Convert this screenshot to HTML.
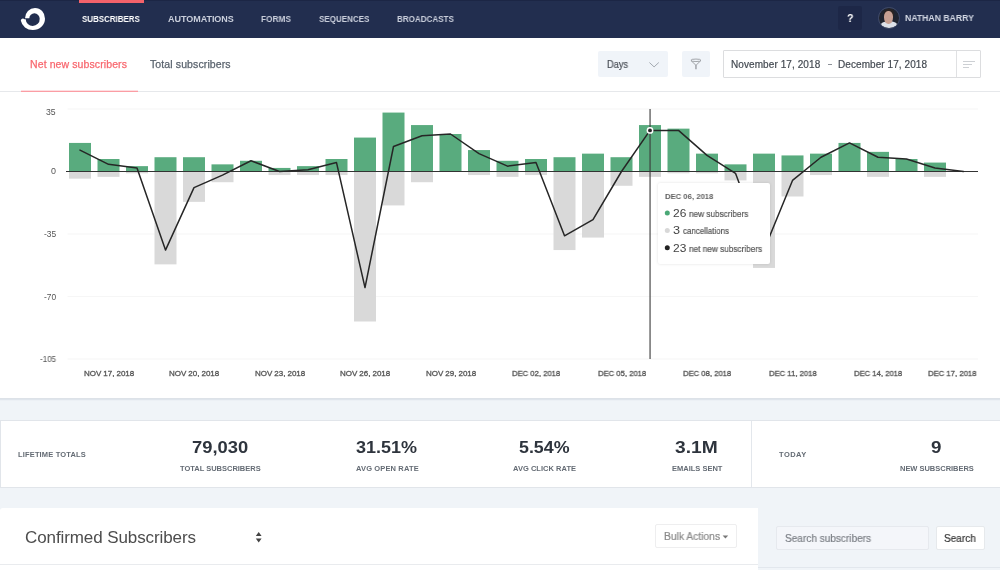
<!DOCTYPE html><html><head><meta charset="utf-8"><title>Subscribers</title><style>

*{box-sizing:border-box;margin:0;padding:0}
html,body{width:1000px;height:570px;overflow:hidden}
body{background:#f0f4f8;font-family:"Liberation Sans", sans-serif;position:relative;color:#444}
.a{position:absolute}
.t{position:absolute;white-space:nowrap;line-height:1;transform-origin:0 50%;will-change:transform}

</style></head><body>
<div class="a" style="left:0;top:38px;width:1000px;height:361px;background:#fff;border-bottom:1px solid #dde2e8;box-shadow:0 1px 1px rgba(170,185,200,.25)"></div>
<div class="a" style="left:0;top:0;width:1000px;height:38px;background:#222e4f;border-top:1px solid #1c2645"></div>
<div class="a" style="left:79px;top:0;width:65px;height:3px;background:#f4626a"></div>
<svg class="a" style="left:10px;top:0" width="50" height="38" viewBox="0 0 50 38"><path d="M15 18.3 A10 10.4 0 0 1 25 7.9 A10 10.6 0 0 1 35 18.7 A12.1 11.3 0 0 1 22.9 30 A12.1 11.3 0 0 1 10.8 20.6 A2.1 2.1 0 0 1 14.4 19.2 L15.7 19.3 A7 7 0 0 0 22.7 26 A7 7 0 0 0 29.7 18.7 A5.3 5.4 0 0 0 24.4 13.3 A5.2 5.2 0 0 0 19.3 18.3 Z" fill="#fff"/></svg>
<div class="a" style="left:838px;top:6px;width:24px;height:24px;background:#1d2747;border-radius:2px"></div>
<div class="a" style="left:878px;top:7px;width:21.6px;height:21.6px;border-radius:50%;background:#20242f;border:1px solid #414c6c;overflow:hidden"><div class="a" style="left:4.6px;top:0.6px;width:10.4px;height:8px;border-radius:50% 50% 30% 30%;background:#2b2422"></div><div class="a" style="left:0.6px;top:13.2px;width:18.4px;height:11px;border-radius:50% 50% 0 0;background:#dde1e9"></div><div class="a" style="left:5.4px;top:3.2px;width:8.8px;height:12.4px;border-radius:45% 45% 50% 50%;background:#c8a092"></div></div>
<div class="a" style="left:0;top:91px;width:1000px;height:1px;background:#e6e8eb"></div>
<div class="a" style="left:21px;top:90px;width:117px;height:1px;background:#fddfe2"></div>
<div class="a" style="left:21px;top:91px;width:117px;height:1px;background:#fb9da4"></div>
<div class="a" style="left:598px;top:51px;width:70px;height:26px;background:#f0f4f9;border-radius:2px"></div>
<svg class="a" style="left:648px;top:61px" width="12" height="8" viewBox="0 0 12 8"><path d="M1.4 1.5 L6.1 5.9 L10.8 1.5" fill="none" stroke="#9aa0a8" stroke-width="0.9"/></svg>
<div class="a" style="left:682px;top:51px;width:28px;height:26px;background:#f0f4f9;border-radius:2px"></div>
<svg class="a" style="left:689px;top:58px" width="14" height="13" viewBox="0 0 14 13"><g fill="none" stroke="#9a9da2" stroke-width="0.9"><ellipse cx="6.95" cy="2.3" rx="5" ry="1.25"/><path d="M1.95 2.5 L6.5 6.9 M11.95 2.5 L7.4 6.9"/><path d="M6.95 6.5 V11.3" stroke-width="1.4"/></g></svg>
<div class="a" style="left:723px;top:50px;width:258px;height:28px;background:#fff;border:1px solid #dcdddf;border-radius:1px"></div>
<div class="a" style="left:956px;top:51px;width:1px;height:26px;background:#e0e1e3"></div>
<div class="a" style="left:963px;top:61px;width:12px;height:1px;background:#cdd0d4"></div>
<div class="a" style="left:963px;top:64px;width:9px;height:1px;background:#cdd0d4"></div>
<div class="a" style="left:963px;top:67px;width:6px;height:1px;background:#cdd0d4"></div>
<div class="a" style="left:828px;top:63.5px;width:4px;height:1px;background:#8d9299"></div>
<svg width="1000" height="300" viewBox="0 100 1000 300" style="position:absolute;left:0;top:100px;overflow:visible">
<rect x="67.5" y="108.50" width="910.5" height="1" fill="#f6f6f6"/>
<rect x="67.5" y="233.50" width="910.5" height="1" fill="#f6f6f6"/>
<rect x="67.5" y="296.00" width="910.5" height="1" fill="#f6f6f6"/>
<rect x="67.5" y="358.50" width="910.5" height="1" fill="#f6f6f6"/>
<rect x="69.00" y="142.93" width="22.00" height="28.57" fill="#59ab7e"/>
<rect x="69.00" y="171.50" width="22.00" height="7.14" fill="#d9d9d9"/>
<rect x="97.50" y="159.00" width="22.00" height="12.50" fill="#59ab7e"/>
<rect x="97.50" y="171.50" width="22.00" height="5.36" fill="#d9d9d9"/>
<rect x="126.00" y="166.14" width="22.00" height="5.36" fill="#59ab7e"/>
<rect x="126.00" y="171.50" width="22.00" height="1.79" fill="#d9d9d9"/>
<rect x="154.50" y="157.21" width="22.00" height="14.29" fill="#59ab7e"/>
<rect x="154.50" y="171.50" width="22.00" height="92.86" fill="#d9d9d9"/>
<rect x="183.00" y="157.21" width="22.00" height="14.29" fill="#59ab7e"/>
<rect x="183.00" y="171.50" width="22.00" height="30.36" fill="#d9d9d9"/>
<rect x="211.50" y="164.36" width="22.00" height="7.14" fill="#59ab7e"/>
<rect x="211.50" y="171.50" width="22.00" height="10.71" fill="#d9d9d9"/>
<rect x="240.00" y="160.79" width="22.00" height="10.71" fill="#59ab7e"/>
<rect x="268.50" y="167.93" width="22.00" height="3.57" fill="#59ab7e"/>
<rect x="268.50" y="171.50" width="22.00" height="3.57" fill="#d9d9d9"/>
<rect x="297.00" y="166.14" width="22.00" height="5.36" fill="#59ab7e"/>
<rect x="297.00" y="171.50" width="22.00" height="3.57" fill="#d9d9d9"/>
<rect x="325.50" y="159.00" width="22.00" height="12.50" fill="#59ab7e"/>
<rect x="325.50" y="171.50" width="22.00" height="3.57" fill="#d9d9d9"/>
<rect x="354.00" y="137.57" width="22.00" height="33.93" fill="#59ab7e"/>
<rect x="354.00" y="171.50" width="22.00" height="150.00" fill="#d9d9d9"/>
<rect x="382.50" y="112.57" width="22.00" height="58.93" fill="#59ab7e"/>
<rect x="382.50" y="171.50" width="22.00" height="33.93" fill="#d9d9d9"/>
<rect x="411.00" y="125.07" width="22.00" height="46.43" fill="#59ab7e"/>
<rect x="411.00" y="171.50" width="22.00" height="10.71" fill="#d9d9d9"/>
<rect x="439.50" y="134.00" width="22.00" height="37.50" fill="#59ab7e"/>
<rect x="468.00" y="150.07" width="22.00" height="21.43" fill="#59ab7e"/>
<rect x="468.00" y="171.50" width="22.00" height="3.57" fill="#d9d9d9"/>
<rect x="496.50" y="160.79" width="22.00" height="10.71" fill="#59ab7e"/>
<rect x="496.50" y="171.50" width="22.00" height="5.36" fill="#d9d9d9"/>
<rect x="525.00" y="159.00" width="22.00" height="12.50" fill="#59ab7e"/>
<rect x="525.00" y="171.50" width="22.00" height="3.57" fill="#d9d9d9"/>
<rect x="553.50" y="157.21" width="22.00" height="14.29" fill="#59ab7e"/>
<rect x="553.50" y="171.50" width="22.00" height="78.57" fill="#d9d9d9"/>
<rect x="582.00" y="153.64" width="22.00" height="17.86" fill="#59ab7e"/>
<rect x="582.00" y="171.50" width="22.00" height="66.07" fill="#d9d9d9"/>
<rect x="610.50" y="157.21" width="22.00" height="14.29" fill="#59ab7e"/>
<rect x="610.50" y="171.50" width="22.00" height="14.29" fill="#d9d9d9"/>
<rect x="639.00" y="125.07" width="22.00" height="46.43" fill="#59ab7e"/>
<rect x="639.00" y="171.50" width="22.00" height="5.36" fill="#d9d9d9"/>
<rect x="667.50" y="128.64" width="22.00" height="42.86" fill="#59ab7e"/>
<rect x="667.50" y="171.50" width="22.00" height="1.79" fill="#d9d9d9"/>
<rect x="696.00" y="153.64" width="22.00" height="17.86" fill="#59ab7e"/>
<rect x="696.00" y="171.50" width="22.00" height="1.79" fill="#d9d9d9"/>
<rect x="724.50" y="164.36" width="22.00" height="7.14" fill="#59ab7e"/>
<rect x="724.50" y="171.50" width="22.00" height="8.93" fill="#d9d9d9"/>
<rect x="753.00" y="153.64" width="22.00" height="17.86" fill="#59ab7e"/>
<rect x="753.00" y="171.50" width="22.00" height="96.43" fill="#d9d9d9"/>
<rect x="781.50" y="155.43" width="22.00" height="16.07" fill="#59ab7e"/>
<rect x="781.50" y="171.50" width="22.00" height="25.00" fill="#d9d9d9"/>
<rect x="810.00" y="153.64" width="22.00" height="17.86" fill="#59ab7e"/>
<rect x="810.00" y="171.50" width="22.00" height="3.57" fill="#d9d9d9"/>
<rect x="838.50" y="142.93" width="22.00" height="28.57" fill="#59ab7e"/>
<rect x="867.00" y="151.86" width="22.00" height="19.64" fill="#59ab7e"/>
<rect x="867.00" y="171.50" width="22.00" height="5.36" fill="#d9d9d9"/>
<rect x="895.50" y="159.00" width="22.00" height="12.50" fill="#59ab7e"/>
<rect x="924.00" y="162.57" width="22.00" height="8.93" fill="#59ab7e"/>
<rect x="924.00" y="171.50" width="22.00" height="5.36" fill="#d9d9d9"/>
<rect x="66" y="171.00" width="912" height="1" fill="#333"/>
<polyline points="80.00,150.07 108.50,164.36 137.00,167.93 165.50,250.07 194.00,187.57 222.50,175.07 251.00,160.79 279.50,171.50 308.00,169.71 336.50,162.57 365.00,287.57 393.50,146.50 422.00,135.79 450.50,134.00 479.00,153.64 507.50,166.14 536.00,162.57 564.50,235.79 593.00,219.71 621.50,171.50 650.00,130.43 678.50,130.43 707.00,155.43 735.50,173.29 764.00,250.07 792.50,180.43 821.00,157.21 849.50,142.93 878.00,157.21 906.50,159.00 935.00,167.93 963.50,171.50" fill="none" stroke="#262626" stroke-width="1.5" stroke-linejoin="round" stroke-linecap="round"/>
<rect x="649.5" y="109" width="1.1" height="250" fill="#3a3a3a"/>
<circle cx="650" cy="130.43" r="3.4" fill="#fff"/>
<circle cx="650" cy="130.43" r="1.9" fill="#262626"/>
</svg>
<div class="a" style="left:657.5px;top:182.5px;width:112.5px;height:81.5px;background:#fff;border-radius:2px;box-shadow:0 0 3px rgba(0,0,0,.13)"></div>
<svg class="a" style="left:660px;top:205px" width="14" height="50" viewBox="660 205 14 50"><circle cx="667.3" cy="212.9" r="2.5" fill="#4aa876"/><circle cx="667.3" cy="230.5" r="2.5" fill="#d8d8d8"/><circle cx="667.3" cy="247.8" r="2.5" fill="#222"/></svg>
<div class="a" style="left:0;top:420px;width:1001px;height:68px;background:#fff;border:1px solid #e1e5ea"></div>
<div class="a" style="left:751px;top:421px;width:1px;height:66px;background:#e3e7ec"></div>
<div class="a" style="left:0;top:508px;width:758px;height:70px;background:#fff;border-radius:3px 0 0 0"></div>
<div class="a" style="left:0;top:564px;width:758px;height:1px;background:#e9ebee"></div>
<div class="a" style="left:758px;top:566.5px;width:242px;height:1px;background:#e2e7ed"></div>
<svg class="a" style="left:255px;top:531px" width="8" height="13" viewBox="0 0 8 13"><path d="M3.7 1 L6.6 5 H0.8 Z M3.7 11.6 L6.6 7.6 H0.8 Z" fill="#444"/></svg>
<div class="a" style="left:655px;top:524px;width:82px;height:24px;background:#fff;border:1px solid #eeeeef;border-radius:2px"></div>
<svg class="a" style="left:722px;top:535px" width="7" height="4" viewBox="0 0 7 4"><path d="M0.6 0.4 H6.2 L3.4 3.4 Z" fill="#777"/></svg>
<div class="a" style="left:776px;top:526px;width:152.5px;height:23.5px;background:#f4f6fa;border:1px solid #e6e9ee;border-radius:2px"></div>
<div class="a" style="left:936px;top:526px;width:49px;height:23.5px;background:#fff;border:1px solid #e6e9ec;border-radius:2px"></div>
<span class="t" style="left:81.95px;top:15.00px;font-size:9.00px;font-weight:700;color:#ffffff;letter-spacing:0.000px;transform:scaleX(0.8828);">SUBSCRIBERS</span>
<span class="t" style="left:168.07px;top:15.00px;font-size:9.00px;font-weight:700;color:#c9cedb;letter-spacing:-0.038px;transform:scaleX(1.0000);">AUTOMATIONS</span>
<span class="t" style="left:261.23px;top:15.00px;font-size:9.00px;font-weight:700;color:#c9cedb;letter-spacing:0.000px;transform:scaleX(0.9215);">FORMS</span>
<span class="t" style="left:319.44px;top:15.00px;font-size:9.00px;font-weight:700;color:#c9cedb;letter-spacing:0.000px;transform:scaleX(0.8921);">SEQUENCES</span>
<span class="t" style="left:397.29px;top:15.00px;font-size:9.00px;font-weight:700;color:#c9cedb;letter-spacing:0.000px;transform:scaleX(0.8956);">BROADCASTS</span>
<span class="t" style="left:905.27px;top:14.00px;font-size:9.00px;font-weight:700;color:#d3d8e4;letter-spacing:0.000px;transform:scaleX(0.9642);">NATHAN BARRY</span>
<span class="t" style="left:846.64px;top:13.00px;font-size:11.50px;font-weight:700;color:#ffffff;letter-spacing:0.000px;transform:scaleX(0.9187);">?</span>
<span class="t" style="left:29.93px;top:59.00px;font-size:10.50px;font-weight:400;color:#f8676e;letter-spacing:0.102px;transform:scaleX(1.0000);-webkit-text-stroke:0.25px #f8676e;">Net new subscribers</span>
<span class="t" style="left:149.65px;top:59.00px;font-size:10.50px;font-weight:400;color:#59626d;letter-spacing:0.114px;transform:scaleX(1.0000);-webkit-text-stroke:0.25px #59626d;">Total subscribers</span>
<span class="t" style="left:606.61px;top:60.00px;font-size:10.00px;font-weight:400;color:#4a4f57;letter-spacing:0.000px;transform:scaleX(0.9231);-webkit-text-stroke:0.2px #4a4f57;">Days</span>
<span class="t" style="left:730.84px;top:60.00px;font-size:10.00px;font-weight:400;color:#444a52;letter-spacing:0.085px;transform:scaleX(1.0000);-webkit-text-stroke:0.2px #444a52;">November 17, 2018</span>
<span class="t" style="left:837.88px;top:60.00px;font-size:10.00px;font-weight:400;color:#444a52;letter-spacing:0.076px;transform:scaleX(1.0000);-webkit-text-stroke:0.2px #444a52;">December 17, 2018</span>
<span class="t" style="left:17.67px;top:451.00px;font-size:7.50px;font-weight:700;color:#646b74;letter-spacing:0.157px;transform:scaleX(1.0000);">LIFETIME TOTALS</span>
<span class="t" style="left:192.29px;top:439.00px;font-size:17.00px;font-weight:700;color:#2e343d;letter-spacing:0.000px;transform:scaleX(1.0797);">79,030</span>
<span class="t" style="left:180.36px;top:465.00px;font-size:7.50px;font-weight:700;color:#646b74;letter-spacing:-0.011px;transform:scaleX(1.0000);">TOTAL SUBSCRIBERS</span>
<span class="t" style="left:356.28px;top:439.00px;font-size:17.00px;font-weight:700;color:#2e343d;letter-spacing:0.000px;transform:scaleX(1.0588);">31.51%</span>
<span class="t" style="left:356.13px;top:465.00px;font-size:7.50px;font-weight:700;color:#646b74;letter-spacing:0.139px;transform:scaleX(1.0000);">AVG OPEN RATE</span>
<span class="t" style="left:518.86px;top:439.00px;font-size:17.00px;font-weight:700;color:#2e343d;letter-spacing:0.000px;transform:scaleX(1.0488);">5.54%</span>
<span class="t" style="left:513.23px;top:465.00px;font-size:7.50px;font-weight:700;color:#646b74;letter-spacing:0.032px;transform:scaleX(1.0000);">AVG CLICK RATE</span>
<span class="t" style="left:675.47px;top:439.00px;font-size:17.00px;font-weight:700;color:#2e343d;letter-spacing:0.000px;transform:scaleX(1.1286);">3.1M</span>
<span class="t" style="left:671.58px;top:465.00px;font-size:7.50px;font-weight:700;color:#646b74;letter-spacing:-0.005px;transform:scaleX(1.0000);">EMAILS SENT</span>
<span class="t" style="left:779.45px;top:451.00px;font-size:7.50px;font-weight:700;color:#646b74;letter-spacing:0.467px;transform:scaleX(1.0000);">TODAY</span>
<span class="t" style="left:931.27px;top:439.00px;font-size:17.00px;font-weight:700;color:#2e343d;letter-spacing:0.000px;transform:scaleX(1.1041);">9</span>
<span class="t" style="left:899.73px;top:465.00px;font-size:7.50px;font-weight:700;color:#646b74;letter-spacing:-0.023px;transform:scaleX(1.0000);">NEW SUBSCRIBERS</span>
<span class="t" style="left:24.79px;top:529.00px;font-size:17.00px;font-weight:400;color:#4d4d4d;letter-spacing:-0.093px;transform:scaleX(1.0000);">Confirmed Subscribers</span>
<span class="t" style="left:663.74px;top:531.00px;font-size:10.50px;font-weight:400;color:#8a8a8a;letter-spacing:0.000px;transform:scaleX(0.9804);-webkit-text-stroke:0.2px #8a8a8a;">Bulk Actions</span>
<span class="t" style="left:784.66px;top:533.00px;font-size:10.50px;font-weight:400;color:#7b7f85;letter-spacing:0.000px;transform:scaleX(0.9584);-webkit-text-stroke:0.2px #7b7f85;">Search subscribers</span>
<span class="t" style="left:944.10px;top:533.00px;font-size:10.50px;font-weight:400;color:#333;letter-spacing:0.000px;transform:scaleX(0.9549);-webkit-text-stroke:0.2px #333;">Search</span>
<span class="t" style="left:664.57px;top:193.00px;font-size:8.00px;font-weight:700;color:#606060;letter-spacing:0.000px;transform:scaleX(0.9624);">DEC 06, 2018</span>
<span class="t" style="left:673.08px;top:208.00px;font-size:11.00px;font-weight:400;color:#444;letter-spacing:0.000px;transform:scaleX(1.0883);">26</span>
<span class="t" style="left:689.18px;top:210.00px;font-size:9.00px;font-weight:400;color:#555;letter-spacing:0.000px;transform:scaleX(0.9121);-webkit-text-stroke:0.2px #555;">new subscribers</span>
<span class="t" style="left:672.77px;top:225.00px;font-size:11.00px;font-weight:400;color:#444;letter-spacing:0.000px;transform:scaleX(1.1515);">3</span>
<span class="t" style="left:683.27px;top:227.00px;font-size:9.00px;font-weight:400;color:#555;letter-spacing:0.000px;transform:scaleX(0.8842);-webkit-text-stroke:0.2px #555;">cancellations</span>
<span class="t" style="left:673.07px;top:243.00px;font-size:11.00px;font-weight:400;color:#444;letter-spacing:0.000px;transform:scaleX(1.0884);">23</span>
<span class="t" style="left:689.33px;top:245.00px;font-size:9.00px;font-weight:400;color:#555;letter-spacing:0.000px;transform:scaleX(0.9142);-webkit-text-stroke:0.2px #555;">net new subscribers</span>
<span class="t" style="left:45.92px;top:108.00px;font-size:8.40px;font-weight:400;color:#555;letter-spacing:0.000px;transform:scaleX(1.0318);">35</span>
<span class="t" style="left:50.93px;top:167.00px;font-size:8.40px;font-weight:400;color:#555;letter-spacing:0.000px;transform:scaleX(1.0655);">0</span>
<span class="t" style="left:43.53px;top:230.00px;font-size:8.40px;font-weight:400;color:#555;letter-spacing:0.000px;transform:scaleX(1.0007);">-35</span>
<span class="t" style="left:43.96px;top:293.00px;font-size:8.40px;font-weight:400;color:#555;letter-spacing:0.000px;transform:scaleX(0.9876);">-70</span>
<span class="t" style="left:39.68px;top:355.00px;font-size:8.40px;font-weight:400;color:#555;letter-spacing:0.000px;transform:scaleX(0.9583);">-105</span>
<span class="t" style="left:84.03px;top:370.00px;font-size:8.00px;font-weight:400;color:#555;letter-spacing:-0.048px;transform:scaleX(1.0000);-webkit-text-stroke:0.3px #555;">NOV 17, 2018</span>
<span class="t" style="left:168.83px;top:370.00px;font-size:8.00px;font-weight:400;color:#555;letter-spacing:-0.048px;transform:scaleX(1.0000);-webkit-text-stroke:0.3px #555;">NOV 20, 2018</span>
<span class="t" style="left:255.03px;top:370.00px;font-size:8.00px;font-weight:400;color:#555;letter-spacing:-0.048px;transform:scaleX(1.0000);-webkit-text-stroke:0.3px #555;">NOV 23, 2018</span>
<span class="t" style="left:339.83px;top:370.00px;font-size:8.00px;font-weight:400;color:#555;letter-spacing:-0.048px;transform:scaleX(1.0000);-webkit-text-stroke:0.3px #555;">NOV 26, 2018</span>
<span class="t" style="left:426.03px;top:370.00px;font-size:8.00px;font-weight:400;color:#555;letter-spacing:-0.048px;transform:scaleX(1.0000);-webkit-text-stroke:0.3px #555;">NOV 29, 2018</span>
<span class="t" style="left:511.89px;top:370.00px;font-size:8.00px;font-weight:400;color:#555;letter-spacing:0.000px;transform:scaleX(0.9603);-webkit-text-stroke:0.3px #555;">DEC 02, 2018</span>
<span class="t" style="left:598.09px;top:370.00px;font-size:8.00px;font-weight:400;color:#555;letter-spacing:0.000px;transform:scaleX(0.9603);-webkit-text-stroke:0.3px #555;">DEC 05, 2018</span>
<span class="t" style="left:682.89px;top:370.00px;font-size:8.00px;font-weight:400;color:#555;letter-spacing:0.000px;transform:scaleX(0.9603);-webkit-text-stroke:0.3px #555;">DEC 08, 2018</span>
<span class="t" style="left:768.93px;top:370.00px;font-size:8.00px;font-weight:400;color:#555;letter-spacing:0.000px;transform:scaleX(0.9608);-webkit-text-stroke:0.3px #555;">DEC 11, 2018</span>
<span class="t" style="left:853.89px;top:370.00px;font-size:8.00px;font-weight:400;color:#555;letter-spacing:0.000px;transform:scaleX(0.9603);-webkit-text-stroke:0.3px #555;">DEC 14, 2018</span>
<span class="t" style="left:927.77px;top:370.00px;font-size:8.00px;font-weight:400;color:#555;letter-spacing:0.000px;transform:scaleX(0.9652);-webkit-text-stroke:0.3px #555;">DEC 17, 2018</span>
</body></html>
